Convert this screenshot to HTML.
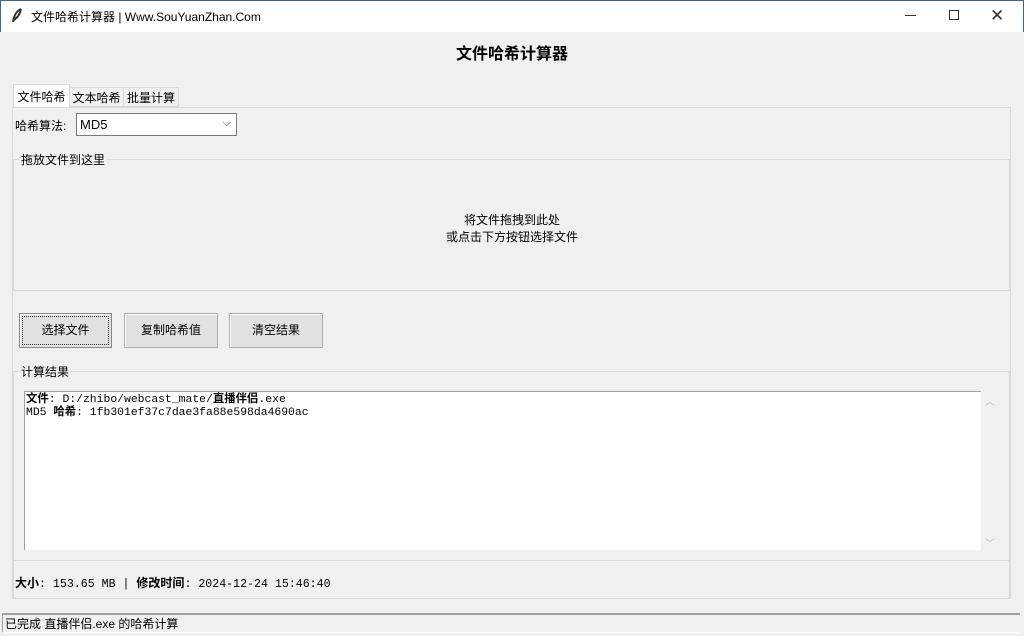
<!DOCTYPE html>
<html><head><meta charset="utf-8"><style>
*{margin:0;padding:0;box-sizing:border-box}
body{width:1024px;height:636px;background:#f0f0f0;font-family:"Liberation Sans","Noto Sans CJK SC",sans-serif;font-size:12px;color:#000;position:relative;overflow:hidden}
.a{position:absolute}
.mono{font-family:"Liberation Mono","Noto Sans CJK SC",monospace;font-size:11.4px}
.btn{position:absolute;top:313px;height:35px;background:#e1e1e1;border:1px solid #adadad;box-shadow:inset 1px 1px #fff;text-align:center;line-height:33px;font-size:12px}
</style></head><body>
<div class="a" style="left:0;top:0;width:1024px;height:32px;background:#fff;border:1px solid #3a6a8a;border-bottom:none"></div>
<svg class="a" style="left:11px;top:8px" width="12" height="16"><path d="M10 1 C5 3 3 8 2 14 M10 1 C9 6 6 10 3 12" stroke="#333" stroke-width="2" fill="none"/></svg>
<div class="a" style="left:31px;top:8px;font-size:12px">文件哈希计算器 | Www.SouYuanZhan.Com</div>
<div class="a" style="left:905px;top:15px;width:11px;height:1px;background:#333"></div>
<div class="a" style="left:949px;top:10px;width:10px;height:10px;border:1px solid #333"></div>
<div class="a" style="left:990px;top:6px;font-size:17px;color:#333">✕</div>
<div class="a" style="left:0;top:40px;width:1024px;text-align:center;font-size:16px;font-weight:bold">文件哈希计算器</div>
<div class="a" style="left:13px;top:84px;width:57px;height:23px;background:#fff;border:1px solid #d9d9d9;border-bottom:none;text-align:center;line-height:24px">文件哈希</div>
<div class="a" style="left:70px;top:87px;width:54px;height:20px;border:1px solid #d9d9d9;border-left:none;text-align:center;line-height:20px">文本哈希</div>
<div class="a" style="left:124px;top:87px;width:55px;height:20px;border:1px solid #d9d9d9;border-left:none;text-align:center;line-height:20px">批量计算</div>
<div class="a" style="left:12px;top:107px;width:999px;height:492px;border:1px solid #d9d9d9;border-top:1px solid #d9d9d9"></div>
<div class="a" style="left:15px;top:117px">哈希算法:</div>
<div class="a" style="left:76px;top:113px;width:161px;height:23px;background:#fff;border:1px solid #7a7a7a;padding-left:3px;line-height:21px;font-size:13px">MD5<span class="a" style="right:5px;top:-1px;color:#555;font-size:11px">⌵</span></div>
<div class="a" style="left:13px;top:159px;width:997px;height:132px;border:1px solid #d9d9d9"></div>
<div class="a" style="left:19px;top:151px;background:#f0f0f0;padding:0 2px">拖放文件到这里</div>
<div class="a" style="left:0;top:212px;width:1024px;text-align:center;line-height:17px">将文件拖拽到此处<br>或点击下方按钮选择文件</div>
<div class="btn" style="left:19px;width:93px;border-color:#888;outline:1px dotted #333;outline-offset:-4px">选择文件</div>
<div class="btn" style="left:124px;width:94px">复制哈希值</div>
<div class="btn" style="left:229px;width:94px">清空结果</div>
<div class="a" style="left:13px;top:371px;width:997px;height:190px;border:1px solid #d9d9d9"></div>
<div class="a" style="left:19px;top:363px;background:#f0f0f0;padding:0 2px">计算结果</div>
<div class="a" style="left:24px;top:391px;width:957px;height:159px;background:#fff;border-top:1px solid #a0a0a0;border-left:1px solid #a0a0a0"></div>
<div class="a" style="left:985px;top:393px;color:#bbb;font-size:10px">︿</div>
<div class="a" style="left:985px;top:535px;color:#bbb;font-size:10px">﹀</div>
<div class="a mono" style="left:26px;top:394px;line-height:13px"><b>文件</b>: D:/zhibo/webcast_mate/<b>直播伴侣</b>.exe<br>MD5 <b>哈希</b>: 1fb301ef37c7dae3fa88e598da4690ac</div>
<div class="a" style="left:13px;top:561px;width:997px;height:38px;border:1px solid #d9d9d9;border-top:none"></div>
<div class="a mono" style="left:15px;top:574px;font-size:11.6px"><b style="font-size:12px">大小</b>: 153.65 MB | <b style="font-size:12px">修改时间</b>: 2024-12-24 15:46:40</div>
<div class="a" style="left:2px;top:613px;width:1018px;height:20px;border-top:2px solid #a0a0a0;border-left:1px solid #a0a0a0;border-bottom:1px solid #fff;line-height:18px;padding-left:2px">已完成 直播伴侣.exe 的哈希计算</div>
</body></html>
